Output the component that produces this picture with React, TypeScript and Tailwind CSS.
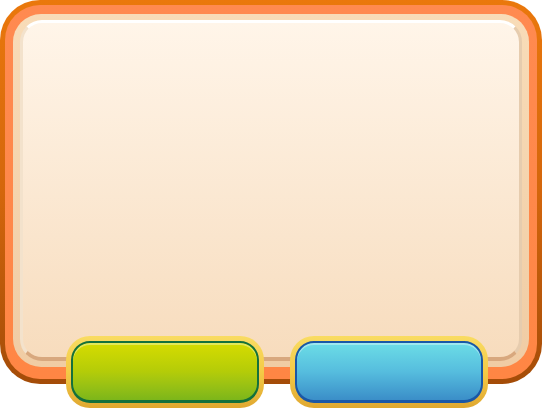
// App.tsx

import React from "react";

interface GameButtonProps {
  variant: "green" | "blue";
}

const GameButton: React.FC<GameButtonProps> = ({ variant }) => {
  const inner =
    variant === "green"
      ? "border-[#14703c] bg-gradient-to-b from-[#d6dc00] via-[#b4cc08] to-[#7cb61a]"
      : "border-[#1a57a6] bg-gradient-to-b from-[#6cdde6] via-[#56bdde] to-[#3b8ec8]";

  return (
    <div className="h-[72px] w-[198px] rounded-[24px] bg-gradient-to-b from-[#f9dc62] via-[#f4ca46] to-[#e0a830] p-[5px] pb-[5px]">
      <div
        className={`h-full w-full rounded-[19px] border-2 border-b-[3px] shadow-[inset_0_2px_0_rgba(255,255,255,0.35)] ${inner}`}
      />
    </div>
  );
};

const App: React.FC = () => {
  return (
    <div className="h-[410px] w-[542px] overflow-hidden bg-white">
      {/* Outer frame */}
      <div className="h-[384px] w-[542px] rounded-[40px] bg-gradient-to-b from-[#ea780c] via-[#d4660c] to-[#a44c08] px-[5px] pt-[5px] pb-[5px]">
        <div className="h-full rounded-[35px] bg-gradient-to-b from-[#ff8a50] to-[#ff8644] px-[8px] pt-[9px] pb-[12px]">
          <div className="h-full rounded-[28px] bg-gradient-to-b from-[#f8dcb8] to-[#f0cca4] px-[7px] pt-[6px] pb-[6px]">
            <div className="h-full rounded-[22px] border-[3px] border-t-white border-l-[#f3e2cc] border-r-[#e6ccae] border-b-[4px] border-b-[#d8a87e] bg-gradient-to-b from-[#fff5e9] to-[#f7dcbd]" />
          </div>
        </div>
      </div>

      {/* Buttons */}
      <div className="-mt-[48px] flex gap-[26px] pl-[66px]">
        <GameButton variant="green" />
        <GameButton variant="blue" />
      </div>
    </div>
  );
};

export default App;
